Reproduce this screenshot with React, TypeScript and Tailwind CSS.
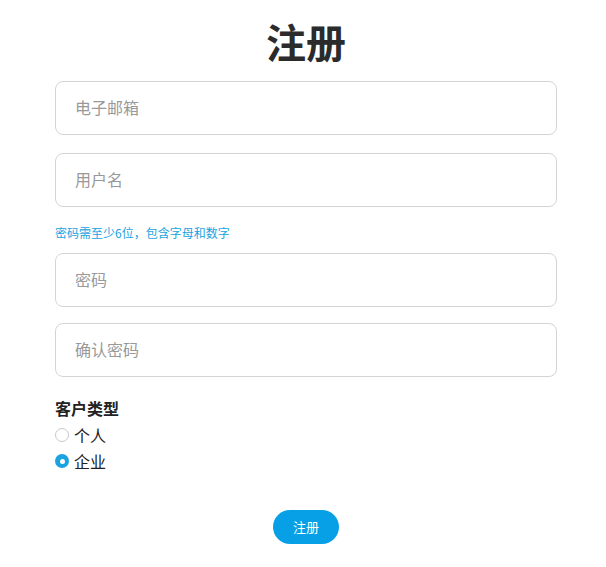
import { useState } from "react"

const font = { fontFamily: '"Noto Sans CJK SC", "Noto Sans", sans-serif' }

function Field({ placeholder, type = "text" }: { placeholder: string; type?: string }) {
  return (
    <input
      type={type}
      placeholder={placeholder}
      className="block w-full h-[54px] rounded-lg border border-[#d4d4d4] bg-white px-[19px] pb-[3px] text-[16px] text-[#333] placeholder:text-[#999] outline-none"
    />
  )
}

function Radio({ checked, label, onClick }: { checked: boolean; label: string; onClick: () => void }) {
  return (
    <label className="flex items-center gap-[5px] h-[26px] cursor-pointer" onClick={onClick}>
      {checked ? (
        <span className="w-[14px] h-[14px] rounded-full bg-[#1aa3e0] flex items-center justify-center">
          <span className="w-[5px] h-[5px] rounded-full bg-white" />
        </span>
      ) : (
        <span className="w-[14px] h-[14px] rounded-full border border-[#c8c8c8] bg-white" />
      )}
      <span className="text-[16px] text-[#222]">{label}</span>
    </label>
  )
}

export default function App() {
  const [kind, setKind] = useState<"personal" | "company">("company")

  return (
    <div className="min-h-screen bg-white" style={font}>
      <div className="pl-[55px] pr-[49px] pt-[13px]">
        <h1 className="text-center text-[40px] leading-[56px] font-bold text-[#2b2b2b]">注册</h1>

        <div className="mt-[12px] flex flex-col gap-[18px]">
          <Field placeholder="电子邮箱" />
          <Field placeholder="用户名" />
        </div>

        <p className="mt-[17px] text-[12px] leading-[18px] text-[#1aa3e0]">密码需至少6位，包含字母和数字</p>

        <div className="mt-[11px] flex flex-col gap-[16px]">
          <Field placeholder="密码" type="password" />
          <Field placeholder="确认密码" type="password" />
        </div>

        <div className="mt-[17px]">
          <div className="text-[16px] leading-[28px] font-bold text-[#222]">客户类型</div>
          <Radio checked={kind === "personal"} label="个人" onClick={() => setKind("personal")} />
          <Radio checked={kind === "company"} label="企业" onClick={() => setKind("company")} />
        </div>

        <div className="mt-[36px] flex justify-center">
          <button className="h-[34px] w-[66px] rounded-full bg-[#079fe6] text-[13px] text-white">注册</button>
        </div>
      </div>
    </div>
  )
}
